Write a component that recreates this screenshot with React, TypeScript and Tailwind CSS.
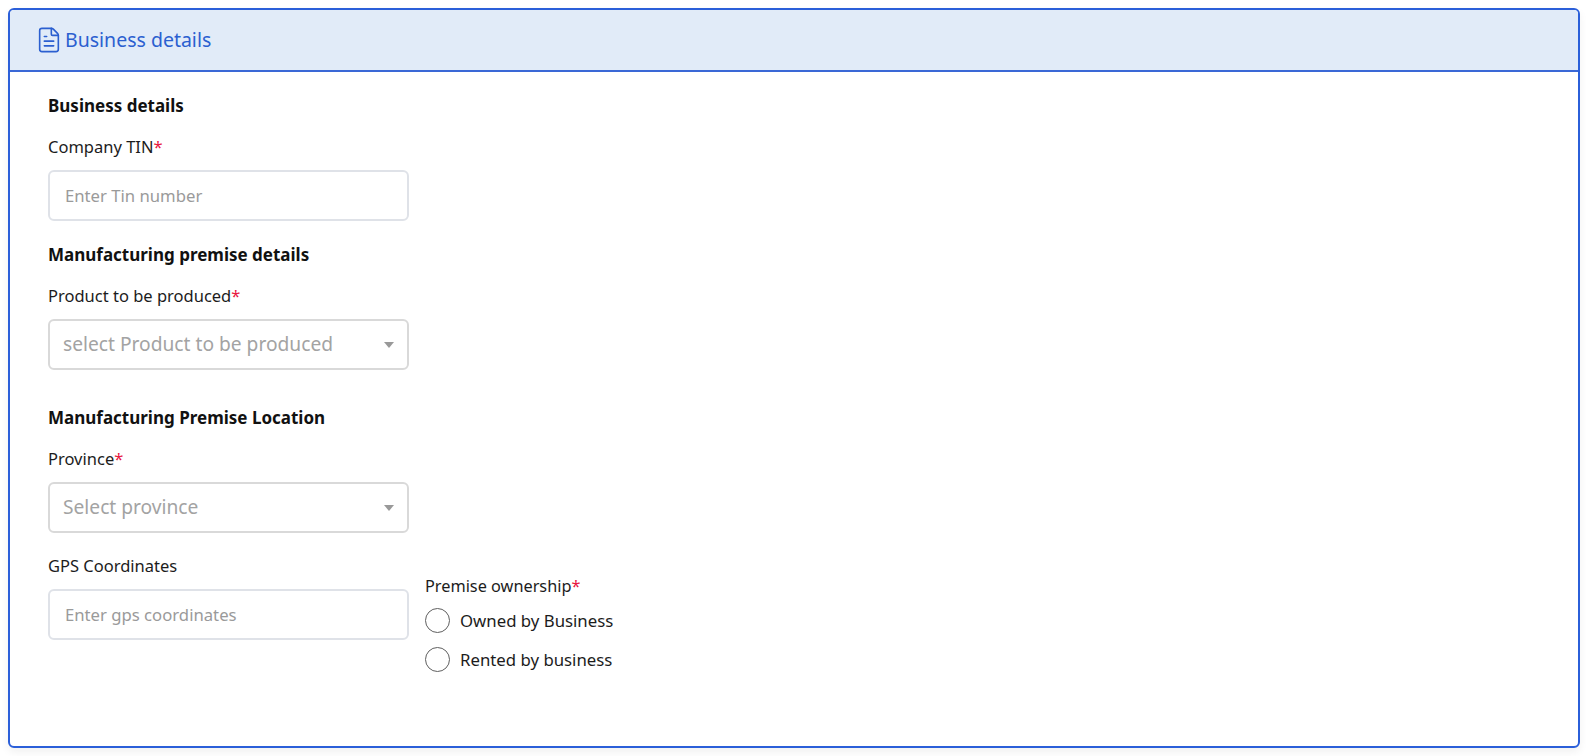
import { FileText } from "lucide-react";

function Label({ text, required, small }: { text: string; required?: boolean; small?: boolean }) {
  return (
    <div className={`leading-[22px] text-[#1c1c1c] ${small ? "text-[16.3px]" : "text-[16.5px]"}`}>
      {text}
      {required && <span className="text-[#e8173f]">*</span>}
    </div>
  );
}

function TextInput({ placeholder }: { placeholder: string }) {
  return (
    <div className="mt-[12px] flex h-[51px] w-[361px] items-center rounded-[6px] border-2 border-[#dfe2e8] pl-[15px] text-[16.7px] text-[#9a9a9a]">
      {placeholder}
    </div>
  );
}

function SelectBox({ placeholder }: { placeholder: string }) {
  return (
    <div className="mt-[12px] flex h-[51px] w-[361px] items-center justify-between rounded-[6px] border-2 border-[#d9d9d9] pl-[13px] pr-[13px] text-[19.2px] text-[#a3a3a3]">
      <span>{placeholder}</span>
      <span className="h-0 w-0 border-x-[5.5px] border-t-[6px] border-x-transparent border-t-[#999999]" />
    </div>
  );
}

function Radio({ label }: { label: string }) {
  return (
    <div className="flex h-[25px] items-center gap-[10px] text-[16.8px] text-[#1c1c1c]">
      <span className="h-[25px] w-[25px] rounded-full border-[1.5px] border-[#5f5f5f] bg-white" />
      {label}
    </div>
  );
}

export default function App() {
  return (
    <div className="h-[756px] w-[1588px] bg-white pl-[8px] pt-[8px] font-['Noto_Sans',sans-serif]">
      <div className="h-[740px] w-[1572px] overflow-hidden rounded-[6px] border-2 border-[#2b5fd9] bg-white shadow-[0_4px_8px_rgba(0,0,0,0.06)]">
        <div className="flex h-[62px] items-center gap-[2px] border-b-2 border-[#3a68d6] bg-[#e1ebf8] pl-[25px] text-[19.5px] text-[#2b5fd0]">
          <FileText className="h-[28px] w-[28px]" strokeWidth={1.4} />
          <span>Business details</span>
        </div>

        <div className="pl-[38px]">
          <h2 className="mt-[23px] text-[17px] font-bold leading-[22px] text-[#111111]">Business details</h2>
          <div className="mt-[19px]">
            <Label text="Company TIN" required />
            <TextInput placeholder="Enter Tin number" />
          </div>

          <h2 className="mt-[23px] text-[17px] font-bold leading-[22px] text-[#111111]">Manufacturing premise details</h2>
          <div className="mt-[19px]">
            <Label text="Product to be produced" required />
            <SelectBox placeholder="select Product to be produced" />
          </div>

          <h2 className="mt-[37px] text-[17px] font-bold leading-[22px] text-[#111111]">Manufacturing Premise Location</h2>
          <div className="mt-[19px]">
            <Label text="Province" required />
            <SelectBox placeholder="Select province" />
          </div>

          <div className="mt-[22px] flex gap-[16px]">
            <div>
              <Label text="GPS Coordinates" />
              <TextInput placeholder="Enter gps coordinates" />
            </div>
            <div className="mt-[20px]">
              <Label text="Premise ownership" required small />
              <div className="mt-[11px] flex flex-col gap-[14px]">
                <Radio label="Owned by Business" />
                <Radio label="Rented by business" />
              </div>
            </div>
          </div>
        </div>
      </div>
    </div>
  );
}
